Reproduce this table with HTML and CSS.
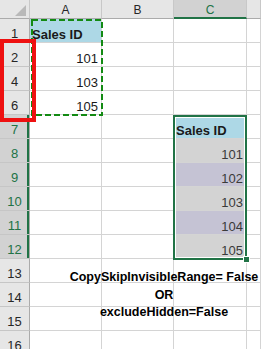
FILE: index.html
```html
<!DOCTYPE html>
<html>
<head>
<meta charset="utf-8">
<link rel="stylesheet" href="styles.css">
</head>
<body>
<div class="sheet">
  <div class="corner"><svg class="tri" width="11" height="11" viewBox="0 0 11 11"><polygon points="11,0 11,11 0,11" fill="#b9b9b9"/></svg></div>
  <div class="ch">A</div><div class="ch">B</div><div class="ch sel">C</div><div class="ch"></div>

  <div class="rh">1</div><div class="c blue bold">Sales ID</div><div class="c"></div><div class="c"></div><div class="c"></div>
  <div class="rh">2</div><div class="c num">101</div><div class="c"></div><div class="c"></div><div class="c"></div>
  <div class="rh">4</div><div class="c num">103</div><div class="c"></div><div class="c"></div><div class="c"></div>
  <div class="rh">6</div><div class="c num">105</div><div class="c"></div><div class="c"></div><div class="c"></div>
  <div class="rh sel">7</div><div class="c"></div><div class="c"></div><div class="c blue bold">Sales ID</div><div class="c"></div>
  <div class="rh sel">8</div><div class="c"></div><div class="c"></div><div class="c num grey">101</div><div class="c"></div>
  <div class="rh sel">9</div><div class="c"></div><div class="c"></div><div class="c num lav">102</div><div class="c"></div>
  <div class="rh sel">10</div><div class="c"></div><div class="c"></div><div class="c num grey">103</div><div class="c"></div>
  <div class="rh sel">11</div><div class="c"></div><div class="c"></div><div class="c num lav">104</div><div class="c"></div>
  <div class="rh sel">12</div><div class="c"></div><div class="c"></div><div class="c num grey">105</div><div class="c"></div>
  <div class="rh">13</div><div class="c"></div><div class="c"></div><div class="c"></div><div class="c"></div>
  <div class="rh">14</div><div class="c"></div><div class="c"></div><div class="c"></div><div class="c"></div>
  <div class="rh">15</div><div class="c"></div><div class="c"></div><div class="c"></div><div class="c"></div>
  <div class="rh">16</div><div class="c"></div><div class="c"></div><div class="c"></div><div class="c"></div>

  <svg class="marquee" width="72" height="97" viewBox="0 0 72 97"><rect x="1" y="1" width="70" height="95" fill="none" stroke="#138a13" stroke-width="2" stroke-dasharray="6 3"/></svg>
  <div class="selbox"></div>
  <div class="handle"></div>
  <div class="redbox"></div>
  <div class="note">CopySkipInvisibleRange= False<br>OR<br>excludeHidden=False</div>
</div>
</body>
</html>
```

FILE: styles.css
```css
html, body {
  margin: 0;
  padding: 0;
  background: #fff;
}
body {
  font-family: "Liberation Sans", Arial, sans-serif;
}
.sheet {
  position: relative;
  width: 261px;
  height: 349px;
  overflow: hidden;
  display: grid;
  grid-template-columns: 30px 72px 72px 73px 1fr;
  grid-template-rows: 19px repeat(14, 24px);
}
.sheet > div {
  box-sizing: border-box;
}
.corner {
  background: #e6e6e6;
  border-right: 1px solid #c8c8c8;
  border-bottom: 1px solid #ababab;
  display: flex;
  justify-content: flex-end;
  align-items: flex-end;
  padding: 0 3px 2px 0;
}
.ch {
  background: #e6e6e6;
  border-right: 1px solid #c8c8c8;
  border-bottom: 1px solid #ababab;
  display: flex;
  justify-content: center;
  align-items: center;
  font-size: 12px;
  color: #262626;
  padding-top: 2px;
}
.ch.sel {
  background: #d2d2d2;
  color: #217346;
  border-bottom: 2px solid #217346;
}
.rh {
  background: #e6e6e6;
  border-right: 1px solid #ababab;
  border-bottom: 1px solid #c6c6c6;
  display: flex;
  justify-content: center;
  align-items: flex-end;
  font-size: 13px;
  line-height: 15px;
  color: #262626;
  padding-bottom: 1px;
}
.rh.sel {
  background: #d2d2d2;
  color: #217346;
  box-shadow: inset -2px 0 #217346;
}
.c {
  border-right: 1px solid #d4d4d4;
  border-bottom: 1px solid #d4d4d4;
  display: flex;
  align-items: flex-end;
  font-size: 13px;
  line-height: 15px;
  color: #1a1a1a;
  padding: 0 3px 0 2px;
  white-space: nowrap;
}
.num {
  justify-content: flex-end;
}
.bold {
  font-weight: bold;
}
.blue {
  background: #add8e6;
}
.grey {
  background: #d3d3d3;
  color: #3a3a3a;
}
.lav {
  background: #c5c3d4;
  color: #3a3a3a;
}
.marquee {
  position: absolute;
  left: 31px;
  top: 19px;
}
.selbox {
  position: absolute;
  left: 173px;
  top: 115px;
  width: 74px;
  height: 145px;
  border: 2px solid #217346;
  box-shadow: inset 0 0 0 1px #fff;
}
.handle {
  position: absolute;
  left: 244px;
  top: 257px;
  width: 5px;
  height: 5px;
  background: #217346;
  box-shadow: 0 0 0 1px #fff;
}
.redbox {
  position: absolute;
  left: 0;
  top: 39px;
  width: 36px;
  height: 83px;
  border: 4px solid #ee1111;
}
.note {
  position: absolute;
  left: 64px;
  top: 269px;
  width: 200px;
  text-align: center;
  font-weight: bold;
  font-size: 12.5px;
  line-height: 17.5px;
  color: #000;
}
```
